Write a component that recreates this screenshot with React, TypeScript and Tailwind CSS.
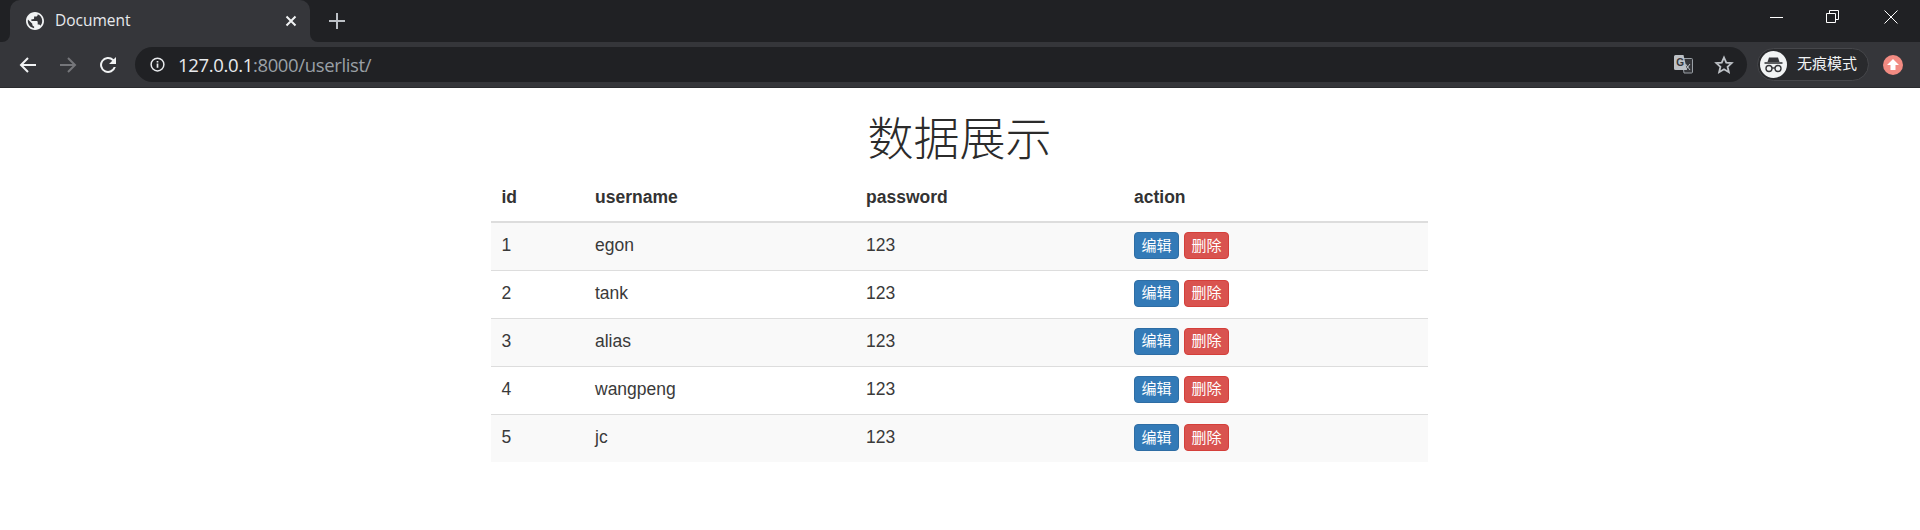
import React from "react";

const rows = [
  [1, "egon"],
  [2, "tank"],
  [3, "alias"],
  [4, "wangpeng"],
  [5, "jc"],
];

const cjk = "font-['Liberation_Sans','Noto_Sans_CJK_SC',sans-serif]";

function Globe() {
  return (
    <svg width="18" height="18" viewBox="2 2 20 20" className="shrink-0">
      <path
        fill="#f1f3f4"
        d="M12 2C6.480 2 2 6.480 2 12s4.480 10 10 10 10-4.480 10-10S17.520 2 12 2zm-1 17.930c-3.950-.490-7-3.850-7-7.930 0-.620.080-1.210.210-1.790L9 15v1c0 1.100.900 2 2 2v1.930zm6.900-2.540c-.260-.810-1-1.390-1.900-1.390h-1v-3c0-.550-.450-1-1-1H8v-2h2c.550 0 1-.450 1-1V7h2c1.100 0 2-.900 2-2v-.410c2.930 1.190 5 4.060 5 7.410 0 2.080-.800 3.970-2.100 5.390z"
      />
    </svg>
  );
}

function Tab() {
  return (
    <div className="relative flex h-[42px] w-[300px] items-center rounded-t-[10px] bg-[#35363a] pl-[16px] pr-[13px]">
      <span className="absolute bottom-0 left-[-8px] h-2 w-2 bg-[#35363a]">
        <span className="block h-2 w-2 rounded-br-[8px] bg-[#202124]" />
      </span>
      <span className="absolute bottom-0 right-[-8px] h-2 w-2 bg-[#35363a]">
        <span className="block h-2 w-2 rounded-bl-[8px] bg-[#202124]" />
      </span>
      <Globe />
      <span className="ml-[11px] flex-1 font-['Open_Sans',sans-serif] text-[15.500px] text-[#e8eaed]">Document</span>
      <svg width="12" height="12" viewBox="0 0 12 12" stroke="#f1f3f4" strokeWidth="2" fill="none">
        <path d="M1.500 1.500l9 9M10.500 1.500l-9 9" />
      </svg>
    </div>
  );
}

function WindowButtons() {
  return (
    <div className="ml-auto flex items-center pr-[22px] pb-[8px]">
      <svg width="14" height="14" viewBox="0 0 14 14" stroke="#fff" strokeWidth="1" fill="none">
        <path d="M0 7.500h13" />
      </svg>
      <svg width="14" height="14" viewBox="0 0 14 14" stroke="#fff" strokeWidth="1" fill="none" className="ml-[42px]">
        <path d="M.5 3.500h9v9h-9zM3.500 3.500v-3h9v9h-3" />
      </svg>
      <svg width="14" height="14" viewBox="0 0 14 14" stroke="#fff" strokeWidth="1" fill="none" className="ml-[44px]">
        <path d="M.5.5l13 13M13.500.5l-13 13" />
      </svg>
    </div>
  );
}

function Toolbar() {
  return (
    <div className="flex h-[46px] items-center border-b border-b-[#2a2b2e] bg-[#35363a]">
      <div className="flex w-[135px] items-center pl-[18px] text-[#f1f3f4]">
        <svg width="20" height="20" viewBox="0 0 20 20" fill="none" stroke="#f1f3f4" strokeWidth="2">
          <path d="M18 10H3.500M10 3l-7 7 7 7" />
        </svg>
        <svg width="20" height="20" viewBox="0 0 20 20" fill="none" stroke="#75767a" strokeWidth="2" className="ml-[20px]">
          <path d="M2 10h14.500M10 3l7 7-7 7" />
        </svg>
        <svg width="20" height="20" viewBox="0 0 20 20" className="ml-[20px]">
          <path d="M15.700 4.300A8 8 0 1 0 17.800 12h-2.100a6 6 0 1 1-1.400-6.300L11 9h7V2z" fill="#f1f3f4" />
        </svg>
      </div>
      <div className="flex h-[35px] w-[1612px] items-center rounded-full bg-[#202124] pl-[15px] pr-[13px]">
        <svg width="15" height="15" viewBox="0 0 16 16" fill="none" className="shrink-0">
          <circle cx="8" cy="8" r="6.800" stroke="#e8eaed" strokeWidth="1.600" />
          <path d="M8 7v4.500M8 4.200v1.600" stroke="#e8eaed" strokeWidth="1.800" />
        </svg>
        <span className="ml-[13px] pt-[1px] font-['Open_Sans',sans-serif] text-[18.500px] tracking-[-0.350px] text-[#9aa0a6]">
          <span className="text-[#e8eaed]">127.0.0.1</span>:8000/userlist/
        </span>
        <span className="ml-auto flex items-center">
          <svg width="19" height="19" viewBox="0 0 19 19">
            <path d="M8 3.500h9.500a1 1 0 0 1 1 1V17a1 1 0 0 1-1 1H10z" fill="#35363a" stroke="#9aa0a6" />
            <path d="M1.500 0H9.500l3.500 15H1.500A1.500 1.500 0 0 1 0 13.500v-12A1.500 1.500 0 0 1 1.500 0z" fill="#bdc1c6" />
            <text x="2.300" y="11" fontSize="10" fontWeight="700" fill="#35363a" fontFamily="Liberation Sans">G</text>
            <path d="M11.500 9l4.500 6M16 9l-4.500 6" stroke="#bdc1c6" strokeWidth="1" />
          </svg>
          <svg width="20" height="20" viewBox="0 0 24 24" fill="none" stroke="#bdc1c6" strokeWidth="2.200" className="ml-[21px]">
            <path d="M12 3l2.700 6.100 6.500.6-4.900 4.400 1.500 6.500-5.800-3.400-5.800 3.400 1.500-6.500-4.900-4.400 6.500-.6z" />
          </svg>
        </span>
      </div>
      <div className="ml-[10px] flex h-[33px] w-[112px] items-center rounded-full border border-[#46474b] bg-[#292a2d] pl-[2px]">
        <span className="flex h-[27px] w-[27px] items-center justify-center rounded-full bg-[#f1f3f4]">
          <svg width="21" height="21" viewBox="0 0 21 21" fill="none">
            <path d="M6 3.500h9l1.500 4.500h-12z" fill="#35363a" />
            <path d="M1.500 9h18" stroke="#35363a" strokeWidth="1.600" />
            <circle cx="6" cy="14.500" r="3" stroke="#35363a" strokeWidth="1.400" />
            <circle cx="15" cy="14.500" r="3" stroke="#35363a" strokeWidth="1.400" />
            <path d="M9 14h3" stroke="#35363a" strokeWidth="1.400" />
          </svg>
        </span>
        <span className={`ml-[10px] text-[15px] text-[#f1f3f4] ${cjk}`}>无痕模式</span>
      </div>
      <span className="ml-[14px] flex h-[20px] w-[20px] items-center justify-center rounded-full bg-[#f28b82]">
        <svg width="12" height="12" viewBox="0 0 12 12">
          <path d="M6 0l6 6H8.500v5h-5V6H0z" fill="#fff" />
        </svg>
      </span>
    </div>
  );
}

function Cell({ children }: { children: React.ReactNode }) {
  return <td className="px-[10.500px] pb-[2px] align-middle">{children}</td>;
}

function ActionButton({ color, label }: { color: string; label: string }) {
  return (
    <span className={`flex h-[27px] w-[45px] items-center justify-center rounded-[4px] border text-[15px] text-white ${color}`}>
      {label}
    </span>
  );
}

export default function App() {
  return (
    <div className={`min-h-[530px] bg-white ${cjk}`}>
      <div className="flex h-[42px] bg-[#202124] pl-[10px]">
        <Tab />
        <svg width="18" height="18" viewBox="0 0 18 18" stroke="#bdc1c6" strokeWidth="2" fill="none" className="ml-[18px] mt-[12px]">
          <path d="M9 1v16M1 9h16" />
        </svg>
        <WindowButtons />
      </div>
      <Toolbar />
      <div className="ml-[491px] w-[937px]">
        <h1 className="pt-[26px] pb-[11px] text-center text-[46px] leading-[50px] font-light text-[#2b2b2b]">数据展示</h1>
        <table className="w-full table-fixed border-collapse text-[17.500px] text-[#3a3a3a]">
          <colgroup>
            <col className="w-[93.500px]" />
            <col className="w-[271px]" />
            <col className="w-[268px]" />
            <col />
          </colgroup>
          <thead>
            <tr className="h-[47px] border-b-2 border-b-[#ddd] text-left font-bold text-[#333]">
              <th className="px-[10.500px] pb-[2px]">id</th>
              <th className="px-[10.500px] pb-[2px]">username</th>
              <th className="px-[10.500px] pb-[2px]">password</th>
              <th className="px-[10.500px] pb-[2px]">action</th>
            </tr>
          </thead>
          <tbody>
            {rows.map(([id, name], i) => (
              <tr key={id} className={`h-[48px] ${i % 2 === 0 ? "bg-[#f9f9f9]" : "bg-white"} ${i < 4 ? "border-b border-b-[#ddd]" : ""}`}>
                <Cell>{id}</Cell>
                <Cell>{name}</Cell>
                <Cell>123</Cell>
                <Cell>
                  <div className="flex gap-[5px] pt-[1px]">
                    <ActionButton color="border-[#2e6da4] bg-[#337ab7]" label="编辑" />
                    <ActionButton color="border-[#d43f3a] bg-[#d9534f]" label="删除" />
                  </div>
                </Cell>
              </tr>
            ))}
          </tbody>
        </table>
      </div>
    </div>
  );
}
